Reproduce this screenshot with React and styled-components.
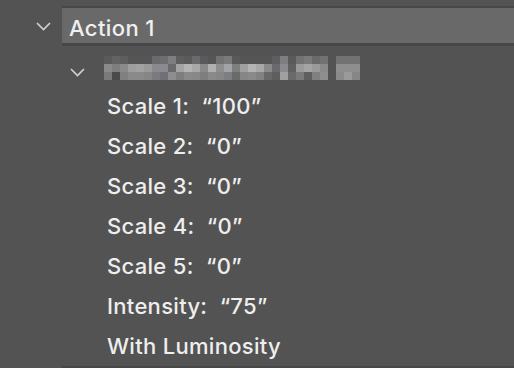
import React from "react";
import styled, { createGlobalStyle } from "styled-components";

const Global = createGlobalStyle`
  html, body { margin: 0; padding: 0; background: #535353; }
  body { font-family: Inter, "Open Sans", "Liberation Sans", sans-serif; overflow: hidden; }
`;

const Panel = styled.div`
  width: 514px;
  height: 368px;
  background: #535353;
  padding-top: 6px;
  box-sizing: border-box;
  overflow: hidden;
`;

const HeaderRow = styled.div`
  display: grid;
  grid-template-columns: 62px 1fr;
`;

const Gutter = styled.div`
  display: flex;
  align-items: center;
  padding-left: ${(p) => p.$indent}px;
`;

const HeaderLabel = styled.div`
  height: 30px;
  padding-top: 5px;
  background: #696969;
  border-top: 2px solid #474747;
  border-bottom: 3px solid #474747;
  display: flex;
  align-items: center;
  padding-left: 7px;
  color: #f0f0f0;
  font-size: 22px;
  font-weight: 500;
  letter-spacing: 0.4px;
`;

const Children = styled.div`
  margin-left: 62px;
  border-bottom: 3px solid #474747;
`;

const SubRow = styled.div`
  height: 40px;
  display: flex;
  align-items: flex-start;
`;

const SubChevron = styled.div`
  width: 42px;
  padding-left: 8px;
  padding-top: 15px;
  box-sizing: border-box;
`;

const Mosaic = styled.svg`
  margin-top: 10px;
  display: block;
`;

const PropRow = styled.div`
  height: 40px;
  display: flex;
  align-items: center;
  padding-left: 45px;
  color: #eeeeee;
  font-size: 22px;
  font-weight: 500;
  letter-spacing: 0.3px;
  white-space: pre;
`;

const Chevron = () => (
  <svg width="15" height="9" viewBox="0 0 15 9" fill="none">
    <path d="M1 1 L7.5 7.5 L14 1" stroke="#d2d2d2" strokeWidth="1.6" />
  </svg>
);

const mosaic = [
  ["#5a5a5a", "#8a8a8a", "#7a7a7a"],
  ["#636363", "#7e7e7e", "#4a4a4a"],
  ["#5e5e5e", "#8a8a8a", "#808080"],
  ["#555555", "#9e9e9e", "#8a8a8a"],
  ["#555555", "#a2a2a2", "#8a8a8a"],
  ["#555555", "#9a9a9a", "#868686"],
  ["#6a6a6e", "#8a8a8e", "#7a7a80"],
  ["#6e6e72", "#8a8a90", "#707078"],
  ["#7e7e7e", "#6a6a6a", "#8e8e8e"],
  ["#5e5e5e", "#a4a4a4", "#7e7e7e"],
  ["#5a5a5a", "#b4b4b4", "#8a8a8a"],
  ["#6a6a6e", "#a8a8a8", "#888888"],
  ["#5a5a5a", "#8a8a8a", "#7e7e7e"],
  ["#555555", "#b0b0b0", "#8a8a8a"],
  ["#727272", "#8e8e8e", "#868686"],
  ["#7a7a7a", "#a0a4a8", "#7e7e82"],
  ["#595959", "#7e7e7e", "#6a6a6a"],
  ["#555555", "#a0a0a0", "#868686"],
  ["#555555", "#b4b4b4", "#8a8a8a"],
  ["#555555", "#a8a8aa", "#828282"],
  ["#555555", "#8a8a8a", "#686868"],
  ["#5e5e62", "#6a6a6e", "#5e5e5e"],
  ["#7e7e7e", "#8a8a90", "#a0a0a0"],
  ["#5a5a5a", "#606060", "#6a6a6a"],
  ["#727272", "#9a9a9a", "#7a7a7a"],
  ["#7a7a7a", "#a4a4a4", "#5e5e5e"],
  ["#6a6a6a", "#9a9a9a", "#808080"],
  ["#727272", "#8a8a8a", "#8e8e8e"],
  [null, null, null],
  ["#727272", "#8e8e8e", "#8a8a8a"],
  ["#727272", "#8e8e8e", "#9a9a9a"],
  ["#727272", "#8e8e8e", "#868686"],
];

const BlurredName = () => (
  <Mosaic width={mosaic.length * 8} height="24" viewBox={`0 0 ${mosaic.length * 8} 24`}>
    {mosaic.map((col, i) =>
      col.map((c, j) =>
        c ? <rect key={`${i}-${j}`} x={i * 8} y={j * 8} width="8" height="8" fill={c} /> : null
      )
    )}
  </Mosaic>
);

const props = [
  "Scale 1:  \u201C100\u201D",
  "Scale 2:  \u201C0\u201D",
  "Scale 3:  \u201C0\u201D",
  "Scale 4:  \u201C0\u201D",
  "Scale 5:  \u201C0\u201D",
  "Intensity:  \u201C75\u201D",
  "With Luminosity",
];

export default function App() {
  return (
    <>
      <Global />
      <Panel>
        <HeaderRow>
          <Gutter $indent={36}>
            <Chevron />
          </Gutter>
          <HeaderLabel>Action 1</HeaderLabel>
        </HeaderRow>
        <Children>
          <SubRow>
            <SubChevron>
              <Chevron />
            </SubChevron>
            <BlurredName />
          </SubRow>
          {props.map((p) => (
            <PropRow key={p}>{p}</PropRow>
          ))}
        </Children>
      </Panel>
    </>
  );
}
